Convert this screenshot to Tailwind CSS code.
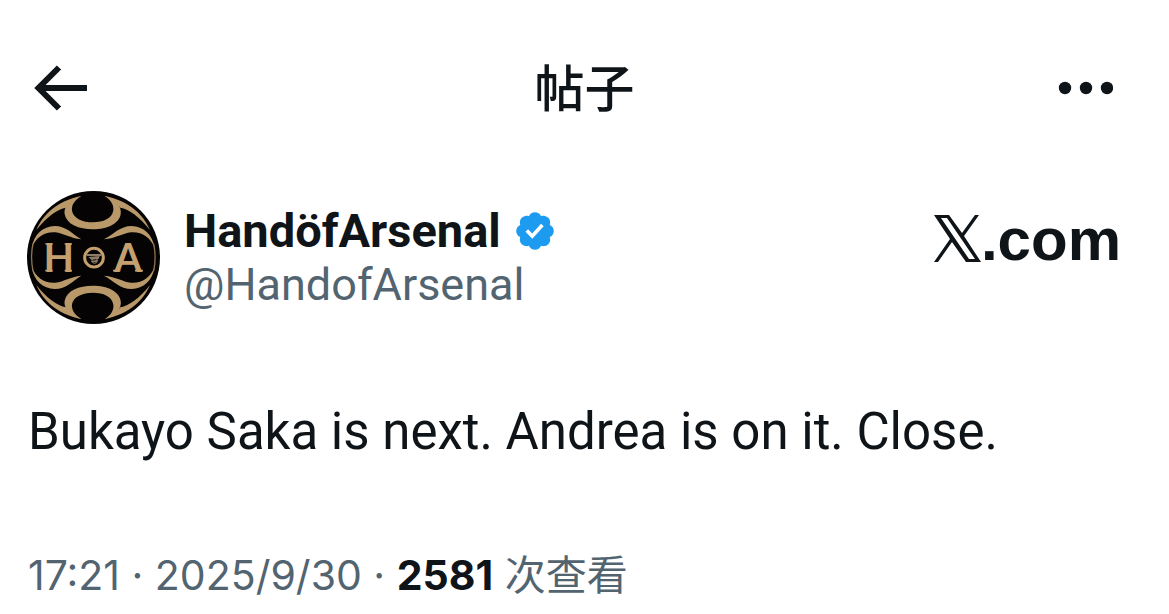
<!DOCTYPE html>
<html lang="zh">
<head>
  <meta charset="UTF-8">
  <meta name="viewport" content="width=device-width, initial-scale=1.0">
  <title>帖子</title>
  <script src="https://cdn.jsdelivr.net/npm/@tailwindcss/browser@4"></script>
</head>
<body class="bg-white text-[#0f1419] font-[Roboto,'Noto_Sans_CJK_SC',sans-serif]">

  <!-- Top bar -->
  <header class="grid grid-cols-3 items-start pt-14 px-8">
    <button aria-label="返回" class="justify-self-start">
      <svg class="w-14 h-16" viewBox="0 0 56 64" fill="none" stroke="currentColor" stroke-width="6">
        <path d="M55 32H7M27 11.500L6.500 32 27 52.500"/>
      </svg>
    </button>
    <h1 class="justify-self-center text-[50px] leading-17 font-medium">帖子</h1>
    <button aria-label="更多" class="justify-self-end pr-6">
      <svg class="w-14 h-16" viewBox="0 0 56 64" fill="currentColor">
        <circle cx="8" cy="32" r="6.200"/>
        <circle cx="29" cy="32" r="6.200"/>
        <circle cx="50" cy="32" r="6.200"/>
      </svg>
    </button>
  </header>

  <main class="px-7">
    <!-- Author -->
    <div class="flex items-center mt-[67px]">
      <svg class="w-[133px] h-[133px] -ml-px shrink-0" viewBox="21 18 399 399" role="img" aria-label="HandöfArsenal">
        <circle cx="220.500" cy="217.500" r="199.500" fill="#050304"/>
        <g fill="#b99869">
          <g id="top">
            <path d="M184 33C146 42 130 70 134 88C140 118 176 133 219 133C262 133 298 116 302 88C306 64 288 42 254 33C272 44 282 59 280 76C276 101 250 112 219 112C188 112 160 100 156 77C154 60 164 45 184 33Z"/>
            <path d="M35 188C42 148 68 124 104 123C140 123 158 148 184 163C150 160 132 145 106 142C72 140 50 156 35 188Z"/>
            <path d="M404 188C397 148 371 124 335 123C299 123 281 148 252 163C289 160 307 145 333 142C367 140 389 156 404 188Z"/>
            <path d="M49 135C68 90 110 48 184 33C160 45 148 54 138 68C112 72 80 96 49 135Z"/>
            <path d="M390 135C371 90 329 48 254 33C279 45 291 54 301 68C327 72 359 96 390 135Z"/>
          </g>
          <use href="#top" transform="matrix(1 0 0 -1 0 435)"/>
        </g>
        <path d="M39 176C34 200 34 234 39 258M401 176C406 200 406 234 401 258" fill="none" stroke="#8c7351" stroke-width="4"/>
        <g fill="#c4a06f" font-family="Lato, sans-serif" font-weight="700" font-size="119">
          <text x="116" y="260" text-anchor="middle">H</text>
          <text x="324" y="260" text-anchor="middle">A</text>
        </g>
        <path d="M76 177H98M134 177H156M76 257H98M134 257H156M279 257H301M345 257H369" stroke="#c4a06f" stroke-width="5"/>
        <circle cx="222" cy="218" r="28" fill="none" stroke="#c4a06f" stroke-width="9"/>
        <path d="M200 207H244V213H200ZM205 216L239 213 236 222 214 224ZM212 228L235 224 229 232H216Z" fill="#8d7c65"/>
        <circle cx="224" cy="227" r="8" fill="none" stroke="#8d7c65" stroke-width="3"/>
      </svg>
      <div class="ml-6 grow">
        <div class="flex items-center gap-3">
          <a href="#" class="text-[47px] leading-[54px] font-bold">HandöfArsenal</a>
          <svg class="w-11 h-11" viewBox="0 0 22 22" role="img" aria-label="认证账号">
            <path fill="#1d9bf0" d="M20.396 11c-.018-.646-.215-1.275-.570-1.816-.354-.540-.852-.972-1.438-1.246.223-.607.270-1.264.140-1.897-.131-.634-.437-1.218-.882-1.687-.470-.445-1.053-.750-1.687-.882-.633-.130-1.290-.083-1.897.140-.273-.587-.704-1.086-1.245-1.440S11.647 1.620 11 1.604c-.646.017-1.273.213-1.813.568s-.969.854-1.240 1.440c-.608-.223-1.267-.272-1.902-.140-.635.130-1.220.436-1.690.882-.445.470-.749 1.055-.878 1.688-.130.633-.080 1.290.144 1.896-.587.274-1.087.705-1.443 1.245-.356.540-.555 1.170-.574 1.817.020.647.218 1.276.574 1.817.356.540.856.972 1.443 1.245-.224.606-.274 1.263-.144 1.896.130.634.433 1.218.877 1.688.470.443 1.054.747 1.687.878.633.132 1.290.084 1.897-.136.274.586.705 1.084 1.246 1.439.540.354 1.170.551 1.816.569.647-.016 1.276-.213 1.817-.567s.972-.854 1.245-1.440c.604.239 1.266.296 1.903.164.636-.132 1.220-.447 1.680-.907.460-.460.776-1.044.908-1.681s.075-1.299-.165-1.903c.586-.274 1.084-.705 1.439-1.246.354-.540.551-1.170.569-1.816z"/>
            <path fill="#fff" d="M9.662 14.850l-3.429-3.428 1.293-1.302 2.072 2.072 4.400-4.794 1.347 1.246z"/>
          </svg>
        </div>
        <a href="#" class="block text-[45px] leading-[54px] text-[#536471]">@HandofArsenal</a>
      </div>
      <!-- Wordmark -->
      <a href="#" aria-label="X.com" class="flex items-end mr-5 mb-9">
        <svg class="w-[47px] h-[47px] mb-2" viewBox="0 0 47 47" fill="currentColor">
          <path fill-rule="evenodd" d="M0 0H15L28 18L41 0H45L30 21L47 47H32L18 27L4 47H0L16 24ZM7 3L35 44H41L13 3Z"/>
        </svg>
        <span class="text-[60px] leading-[60px] font-bold font-['Liberation_Sans',sans-serif]">.com</span>
      </a>
    </div>

    <!-- Post -->
    <p class="mt-[75px] text-[51px] leading-[66px]">Bukayo Saka is next. Andrea is on it. Close.</p>

    <!-- Time and views -->
    <p class="mt-[81px] text-[41px] leading-[58px] text-[#536471] font-[Inter,'Noto_Sans_CJK_SC',sans-serif]"><time datetime="2025-09-30T17:21">17:21 · 2025/9/30</time> · <a href="#"><b class="text-[#0f1419]">2581</b> 次查看</a></p>
  </main>

</body>
</html>
